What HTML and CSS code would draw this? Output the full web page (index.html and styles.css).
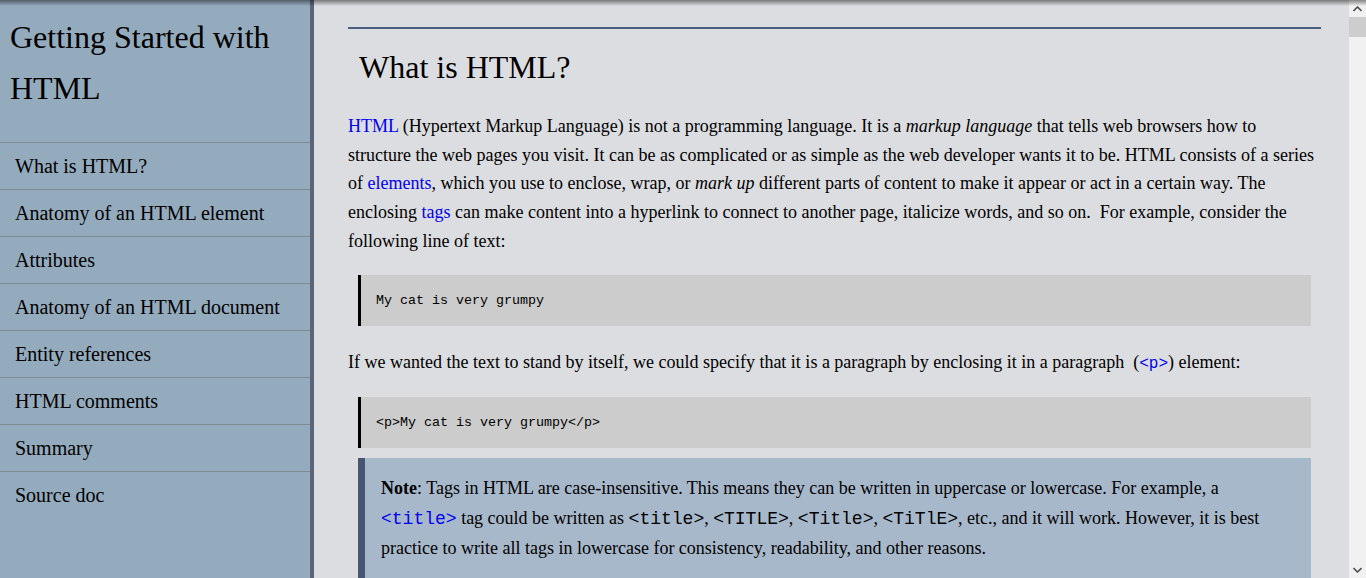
FILE: index.html
```html
<!DOCTYPE html>
<html lang="en">
<head>
<meta charset="utf-8">
<title>Getting Started with HTML</title>
<link rel="stylesheet" href="styles.css">
</head>
<body>
<div class="page">
  <aside class="sidebar">
    <h2 class="side-title">Getting Started with HTML</h2>
    <nav class="nav">
      <a class="nav-item" href="#">What is HTML?</a>
      <a class="nav-item" href="#">Anatomy of an HTML element</a>
      <a class="nav-item" href="#">Attributes</a>
      <a class="nav-item" href="#">Anatomy of an HTML document</a>
      <a class="nav-item" href="#">Entity references</a>
      <a class="nav-item" href="#">HTML comments</a>
      <a class="nav-item" href="#">Summary</a>
      <a class="nav-item" href="#">Source doc</a>
    </nav>
  </aside>
  <main class="main">
    <hr class="rule">
    <h1 class="title">What is HTML?</h1>
    <p class="para"><a href="#">HTML</a> (Hypertext Markup Language) is not a programming language. It is a <em>markup language</em> that tells web browsers how to structure the web pages you visit. It can be as complicated or as simple as the web developer wants it to be. HTML consists of a series of <a href="#">elements</a>, which you use to enclose, wrap, or <em>mark up</em> different parts of content to make it appear or act in a certain way. The enclosing <a href="#">tags</a> can make content into a hyperlink to connect to another page, italicize words, and so on.&nbsp; For example, consider the following line of text:</p>
    <pre class="code">My cat is very grumpy</pre>
    <p class="para">If we wanted the text to stand by itself, we could specify that it is a paragraph by enclosing it in a paragraph &nbsp;(<a href="#"><code class="inline small">&lt;p&gt;</code></a>) element:</p>
    <pre class="code">&lt;p&gt;My cat is very grumpy&lt;/p&gt;</pre>
    <div class="note">
      <p><strong>Note</strong>: Tags in HTML are case-insensitive. This means they can be written in uppercase or lowercase. For example, a <a href="#"><code class="inline">&lt;title&gt;</code></a> tag could be written as <code class="inline">&lt;title&gt;</code>, <code class="inline">&lt;TITLE&gt;</code>, <code class="inline">&lt;Title&gt;</code>, <code class="inline">&lt;TiTlE&gt;</code>, etc., and it will work. However, it is best practice to write all tags in lowercase for consistency, readability, and other reasons.</p>
    </div>
  </main>
  <div class="scrollbar">
    <div class="sb-btn">
      <svg width="9" height="6" viewBox="0 0 9 6"><path d="M0.5 5 L4.5 1 L8.5 5" fill="none" stroke="#505050" stroke-width="1.6"/></svg>
    </div>
    <div class="sb-thumb"></div>
    <div class="sb-track"></div>
    <div class="sb-btn">
      <svg width="9" height="6" viewBox="0 0 9 6"><path d="M0.5 1 L4.5 5 L8.5 1" fill="none" stroke="#505050" stroke-width="1.6"/></svg>
    </div>
  </div>
</div>
<div class="top-shadow"></div>
</body>
</html>
```
FILE: styles.css
```css
html, body {
  margin: 0;
  height: 100%;
  overflow: hidden;
}
body {
  font-family: "Liberation Serif", "Times New Roman", serif;
  color: #000;
}
.page {
  display: flex;
  height: 578px;
}
.sidebar {
  width: 310px;
  flex: none;
  background: #94abbe;
  border-right: 4px solid #5c6478;
}
.side-title {
  font-size: 32px;
  font-weight: normal;
  line-height: 51px;
  margin: 0;
  padding: 12px 10px 28px 10px;
  border-bottom: 1px solid #7f8b92;
}
.nav {
  display: flex;
  flex-direction: column;
}
.nav-item {
  display: block;
  font-size: 20px;
  line-height: 24px;
  padding: 11px 15px 11px 15px;
  color: #000;
  text-decoration: none;
  border-bottom: 1px solid #7f8b92;
}
.nav-item:last-child {
  border-bottom: none;
}
.main {
  flex: 1;
  min-width: 0;
  overflow: hidden;
  background: #dcdde1;
  padding: 27px 28px 0 34px;
}
.rule {
  border: none;
  border-top: 2px solid #4a5f7f;
  margin: 0;
}
.title {
  font-size: 32px;
  font-weight: normal;
  line-height: 37px;
  margin: 20px 0 26px 0;
  padding-left: 11px;
}
.para {
  font-size: 18px;
  line-height: 28.7px;
  margin: 22px 0 0 0;
}
a {
  color: #0000ee;
  text-decoration: none;
}
.code {
  margin: 19px 10px 0 10px;
  background: #cccccc;
  border-left: 3px solid #000;
  padding: 18px 15px;
  font-family: "Liberation Mono", "Courier New", monospace;
  font-size: 13.333px;
  line-height: 15px;
}
.inline {
  font-family: "Liberation Mono", "Courier New", monospace;
  font-size: 1em;
}
.inline.small {
  font-size: 16px;
}
.note {
  margin: 10px 10px 0 10px;
  background: #a8b8cb;
  border-left: 7px solid #465670;
  padding: 16px 16px 15px 16px;
}
.note p {
  margin: 0;
  font-size: 18px;
  line-height: 29.5px;
}
.scrollbar {
  width: 17px;
  flex: none;
  background: #f1f1f1;
  display: flex;
  flex-direction: column;
}
.sb-btn {
  height: 17px;
  display: flex;
  align-items: center;
  justify-content: center;
}
.sb-thumb {
  height: 20px;
  background: #cdcdcd;
}
.sb-track {
  flex: 1;
}
.top-shadow {
  position: fixed;
  left: 0;
  top: 0;
  width: 100%;
  height: 6px;
  background: linear-gradient(rgba(0,0,0,0.45), rgba(0,0,0,0));
  pointer-events: none;
}
```
